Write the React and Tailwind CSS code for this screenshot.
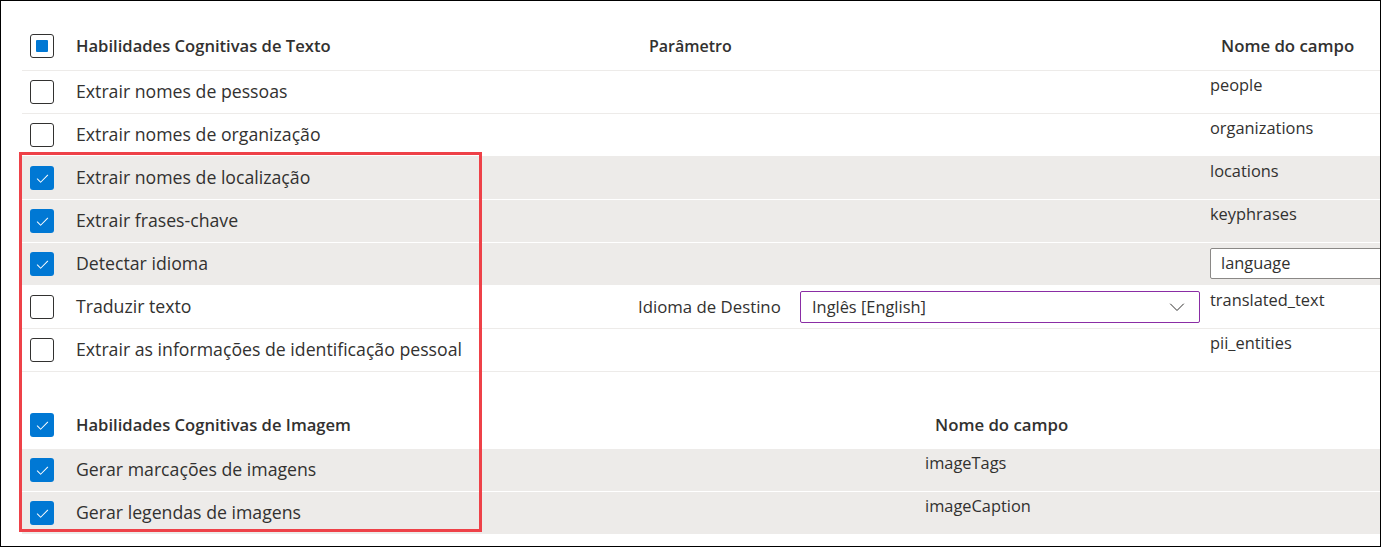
import React from 'react';

const textSkills = [
  { label: 'Extrair nomes de pessoas', field: 'people', checked: false },
  { label: 'Extrair nomes de organização', field: 'organizations', checked: false },
  { label: 'Extrair nomes de localização', field: 'locations', checked: true },
  { label: 'Extrair frases-chave', field: 'keyphrases', checked: true },
  { label: 'Detectar idioma', field: 'language', checked: true, input: true },
  { label: 'Traduzir texto', field: 'translated_text', checked: false, param: true },
  { label: 'Extrair as informações de identificação pessoal', field: 'pii_entities', checked: false },
];

const imageSkills = [
  { label: 'Gerar marcações de imagens', field: 'imageTags' },
  { label: 'Gerar legendas de imagens', field: 'imageCaption' },
];

const Checkbox = ({ state }) => {
  if (state === 'checked') {
    return (
      <div className="w-6 h-6 rounded-[3px] bg-[#0078d4] flex items-center justify-center shrink-0">
        <svg width="15" height="15" viewBox="0 0 16 16" fill="none">
          <path d="M2.5 8.5 L6 12 L13.5 4.5" stroke="white" strokeWidth="1.1" strokeLinecap="round" strokeLinejoin="round" />
        </svg>
      </div>
    );
  }
  if (state === 'mixed') {
    return (
      <div className="w-6 h-6 rounded-[3px] border border-[#323130] flex items-center justify-center shrink-0">
        <div className="w-3 h-3 bg-[#0078d4] rounded-[1px]" />
      </div>
    );
  }
  return <div className="w-6 h-6 rounded-[3px] border border-[#323130] bg-white shrink-0" />;
};

const SkillRow = ({ skill }) => (
  <div
    className={`grid grid-cols-[598px_590px_1fr] h-[43px] border-b ${
      skill.checked ? 'bg-[#edebe9] border-white' : 'border-[#edebe9]'
    }`}
  >
    <div className="flex items-center pl-2">
      <Checkbox state={skill.checked ? 'checked' : 'unchecked'} />
      <span className="ml-[22px] pb-[2px] text-[17.7px]">{skill.label}</span>
    </div>
    <div className="flex items-center">
      {skill.param && (
        <>
          <span className="pl-[18px] text-[16.8px]">Idioma de Destino</span>
          <div className="ml-auto mr-[10px] w-[400px] h-8 border border-[#8a2da5] rounded-[2px] bg-white flex items-center pl-[11px] pr-[14px]">
            <span className="flex-1">Inglês [English]</span>
            <svg width="16" height="16" viewBox="0 0 16 16" fill="none">
              <path d="M1.5 5 L8 11.5 L14.5 5" stroke="#323130" strokeWidth="1" strokeLinecap="round" strokeLinejoin="round" />
            </svg>
          </div>
        </>
      )}
    </div>
    {skill.input ? (
      <div className="pt-[5px]">
        <div className="w-[220px] h-[31px] border border-[#8a8886] rounded-[2px] bg-white flex items-center pl-[10px]">
          {skill.field}
        </div>
      </div>
    ) : (
      <div className="pt-[3px] leading-[22px]">{skill.field}</div>
    )}
  </div>
);

export default function App() {
  return (
    <div
      className="relative w-[1381px] h-[547px] border border-black bg-white overflow-hidden pt-[21px] pl-[21px] text-[16.4px] text-[#323130]"
      style={{ fontFamily: '"Open Sans", "Noto Sans", sans-serif' }}
    >
      {/* text skills */}
      <div className="grid grid-cols-[598px_590px_1fr] h-[49px] border-b border-[#edebe9] font-semibold">
        <div className="flex items-center pl-2">
          <Checkbox state="mixed" />
          <span className="ml-[22px] text-[16.6px]">Habilidades Cognitivas de Texto</span>
        </div>
        <div className="flex items-center pl-[29px] text-[16px]">Parâmetro</div>
        <div className="flex items-center pl-[11px] text-[16.8px]">Nome do campo</div>
      </div>
      {textSkills.map((skill) => (
        <SkillRow key={skill.label} skill={skill} />
      ))}

      {/* image skills */}
      <div className="mt-[29px]">
        <div className="grid grid-cols-[903px_1fr] h-12 font-semibold">
          <div className="flex items-center pl-2">
            <Checkbox state="checked" />
            <span className="ml-[22px] text-[16.6px]">Habilidades Cognitivas de Imagem</span>
          </div>
          <div className="flex items-center pl-[10px] text-[16.8px]">Nome do campo</div>
        </div>
        {imageSkills.map((skill) => (
          <div key={skill.label} className="grid grid-cols-[903px_1fr] h-[43px] bg-[#edebe9] border-b border-white">
            <div className="flex items-center pl-2">
              <Checkbox state="checked" />
              <span className="ml-[22px] pb-[2px] text-[17.7px]">{skill.label}</span>
            </div>
            <div className="pt-[3px] leading-[22px]">{skill.field}</div>
          </div>
        ))}
      </div>

      {/* highlight annotation */}
      <div className="absolute left-[18px] top-[151px] w-[463px] h-[380px] border-[3px] border-[#ee4148] pointer-events-none" />
    </div>
  );
}
